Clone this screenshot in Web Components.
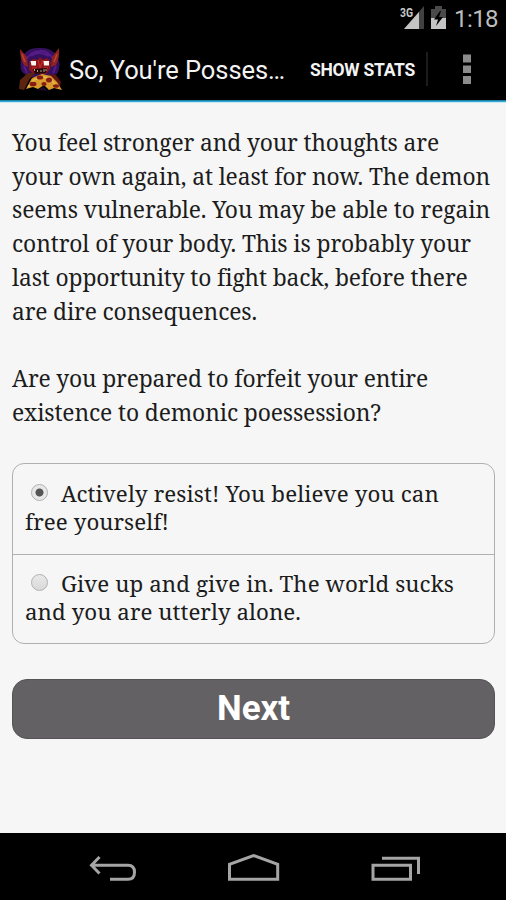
<!DOCTYPE html>
<html lang="en">
<head>
<meta charset="utf-8">
<title>So, You're Possessed!</title>
<style>
  body { margin: 0; }
</style>
</head>
<body>
<game-screen></game-screen>

<template id="game-screen">
  <style>
    :host {
      display: flex;
      flex-direction: column;
      width: 506px;
      height: 900px;
      overflow: hidden;
      background: #f6f6f6;
      color: #1c1c1c;
      font-family: "Noto Serif", "Droid Serif", "DejaVu Serif Condensed", "DejaVu Serif", serif;
      font-stretch: condensed;
      font-size: 22.800px;
    }
    main { flex: 1; padding: 23px 11px 0 12px; }
    .story { line-height: 33.7px; }
    .question { margin-top: 33.7px; }
    choice-list { margin-top: 34px; }
    next-button { margin-top: 35px; }
  </style>
  <status-bar></status-bar>
  <action-bar>So, You're Posses…</action-bar>
  <main>
    <div class="story">
      <text-line width="427">You feel stronger and your thoughts are</text-line>
      <text-line width="478">your own again, at least for now. The demon</text-line>
      <text-line width="478">seems vulnerable. You may be able to regain</text-line>
      <text-line width="459">control of your body. This is probably your</text-line>
      <text-line width="455">last opportunity to fight back, before there</text-line>
      <text-line width="245">are dire consequences.</text-line>
    </div>
    <div class="story question">
      <text-line width="416">Are you prepared to forfeit your entire</text-line>
      <text-line width="369">existence to demonic poessession?</text-line>
    </div>
    <choice-list>
      <choice-item checked>
        <text-line slot="first" width="378">Actively resist! You believe you can</text-line>
        <text-line width="144">free yourself!</text-line>
      </choice-item>
      <choice-item>
        <text-line slot="first" width="393">Give up and give in. The world sucks</text-line>
        <text-line width="276">and you are utterly alone.</text-line>
      </choice-item>
    </choice-list>
    <next-button>Next</next-button>
  </main>
  <nav-bar></nav-bar>
</template>

<template id="status-bar">
  <style>
    :host {
      display: flex;
      justify-content: flex-end;
      align-items: center;
      height: 37px;
      padding-right: 8px;
      background: #000;
      color: #bdbdbd;
      font: 24px Roboto, sans-serif;
    }
    svg { margin-right: 7px; }
    text { font: bold 12px Roboto, sans-serif; fill: #c8c8c8; }
  </style>
  <svg width="48" height="37" viewBox="399 0 48 37">
    <path d="M424 6V29H404Z" fill="#414141"/>
    <path d="M419 12V29H404Z" fill="#c4c4c4"/>
    <path d="M398 5H414V15L409 19H398Z" fill="#000"/>
    <text x="400" y="17" textLength="13" lengthAdjust="spacingAndGlyphs">3G</text>
    <path d="M431 9H435V6H442V9H446V18H431Z" fill="#4a4a4a"/>
    <path d="M431 18H446V29H431Z" fill="#c4c4c4"/>
    <path d="M440 11L434 19.500H438L436 26L443 17H439L441 11Z" fill="#000"/>
  </svg>
  <text-line width="44">1:18</text-line>
</template>

<template id="action-bar">
  <style>
    :host {
      display: flex;
      align-items: center;
      box-sizing: border-box;
      height: 66px;
      padding: 0 0 3px 18px;
      background: linear-gradient(#000 63px, #1c7ea5 63px, #1c7ea5 64px, #39a9d4 64px, #39a9d4 65px, #c5e8f5 65px);
      color: #f3f3f3;
      font-family: Roboto, sans-serif;
      font-stretch: normal;
    }
    .logo { flex: none; }
    .title { width: 241px; padding: 3px 0 0 6px; font-size: 25.500px; }
    .stats { width: 116px; padding-top: 2px; font-size: 17.500px; font-weight: bold; }
    .more { border-left: 2px solid #1c1c1c; height: 34px; padding-left: 34px; }
  </style>
  <svg class="logo" width="45" height="44" viewBox="18 47 45 44">
    <path d="M21 70Q19 60 24 54Q29 47 40 48Q51 47 57 56Q62 65 57 74L49 77H29L23 73Z" fill="#35105f"/>
    <path d="M25 62Q30 51 40 51M54 60Q48 50 40 51M24 66L27 73M56 66L53 73M31 56Q38 50 49 56" fill="none" stroke="#551b87" stroke-width="2"/>
    <path d="M20 49L27 57L28 67L24 65Q20 59 20 49ZM59 48L52 57L51 67L56 65Q60 57 59 48Z" fill="#8d2320"/>
    <path d="M22 54L25 62M57 54L54 62" stroke="#b84438" stroke-width="1.500"/>
    <path d="M29 62L33 59L38 60L40 57L43 60L47 58L51 62L50 69L46 74H34L29 70Z" fill="#8a151b"/>
    <path d="M38 60L40 68L43 60M32 68H37M43 68H48" fill="none" stroke="#bb2626" stroke-width="1.500"/>
    <path d="M30.500 61H36V65.500H31.500ZM43.500 61H49V65.500H44Z" fill="#fff5ee"/>
    <path d="M33 69L47 68L46 73L35 74Z" fill="#1e0909"/>
    <path d="M34.500 69V71M37.500 70V72M41 70V72M44 69V72M46 69V71" stroke="#b69d8b"/>
    <path d="M19 89L20 80L28 73L35 73L29 80L24 90Z" fill="#5b2410"/>
    <path d="M48 74L56 75L61 82L60 86L54 82Z" fill="#611612"/>
    <path d="M26 89L32 78L42 74L51 76L57 82L62 90L54 88L49 90L44 85L38 89L33 87Z" fill="#d99b2c"/>
    <path d="M28 87L34 80L42 77L49 78L55 84" fill="none" stroke="#e8bc4a" stroke-width="1.500"/>
    <g fill="#851d16">
      <ellipse cx="40" cy="77.500" rx="3.200" ry="2"/>
      <ellipse cx="49" cy="80" rx="3" ry="2.500"/>
      <ellipse cx="33" cy="84" rx="3.500" ry="2.300"/>
      <ellipse cx="44" cy="84" rx="2.600" ry="2"/>
      <ellipse cx="56" cy="86" rx="3" ry="1.800"/>
    </g>
    <path d="M38 90L43 87L48 91Z" fill="#1d0b32"/>
  </svg>
  <div class="title"><text-line width="216"><slot></slot></text-line></div>
  <div class="stats"><text-line width="105">SHOW STATS</text-line></div>
  <svg class="more" width="10" height="34" viewBox="0 0 10 34">
    <path d="M1 2.500H9V10.500H1ZM1 13.500H9V21H1ZM1 24H9V32H1Z" fill="#8c8c8c"/>
  </svg>
</template>

<template id="choice-list">
  <style>
    :host {
      display: block;
      box-sizing: border-box;
      height: 181px;
      border: 1.500px solid #b0b0b0;
      border-radius: 12px;
      font-size: 22.300px;
    }
  </style>
  <slot></slot>
</template>

<template id="choice-item">
  <style>
    :host {
      display: block;
      box-sizing: border-box;
      height: 90px;
      padding: 16px 12px 0;
      line-height: 28px;
    }
    :host(:not(:first-child)) { border-top: 1.500px solid #b0b0b0; padding-top: 15px; }
    .row { display: flex; align-items: center; }
    i {
      box-sizing: border-box;
      width: 17px;
      height: 17px;
      margin: -3px 13px 0 6px;
      border: 1.500px solid #b0b0b0;
      border-radius: 50%;
      background: linear-gradient(#e9e9e9, #d9d9d9);
    }
    :host([checked]) i { background: radial-gradient(circle, #555 0 3.500px, #e8e8e8 4.500px); }
  </style>
  <div class="row"><i></i><slot name="first"></slot></div>
  <slot></slot>
</template>

<template id="next-button">
  <style>
    :host {
      display: flex;
      align-items: center;
      justify-content: center;
      box-sizing: border-box;
      height: 60px;
      padding-bottom: 1px;
      border: 1px solid #555355;
      border-radius: 15px;
      background: #636163;
      color: #fff;
      font: bold 35px Roboto, sans-serif;
    }
  </style>
  <text-line width="73"><slot></slot></text-line>
</template>

<template id="nav-bar">
  <style>
    :host { display: block; height: 67px; background: #000; }
    svg { display: block; }
  </style>
  <svg width="506" height="67" viewBox="0 833 506 67" fill="none" stroke="#a5a5a5" stroke-width="3">
    <path d="M99.500 857L91.500 865.300L99.500 873.500M92 865.300H128Q134.500 865.300 134.500 872.300T128 879.300H110"/>
    <path d="M229.500 879.300V864.300L253.500 855.500L277.700 864.300V879.300Z"/>
    <path d="M373 865.300H410.500V879.300H373ZM382 858.300H418.500V874"/>
  </svg>
</template>

<script>
  // Registers a tag whose shadow root is cloned from the template of the same name
  function define(name) {
    customElements.define(name, class extends HTMLElement {
      constructor() {
        super();
        const template = document.getElementById(name);
        this.attachShadow({ mode: 'open' }).appendChild(template.content.cloneNode(true));
      }
    });
  }

  // One line of text, tracked to fill the given width
  class TextLine extends HTMLElement {
    constructor() {
      super();
      this.attachShadow({ mode: 'open' }).innerHTML = `
        <style>
          :host { display: block; white-space: nowrap; }
          span { display: inline-block; }
        </style>
        <span><slot></slot></span>`;
    }

    fit() {
      const span = this.shadowRoot.querySelector('span');
      const slot = this.shadowRoot.querySelector('slot');
      const text = slot.assignedNodes({ flatten: true }).map(n => n.textContent).join('');
      const rest = this.getAttribute('width') - span.getBoundingClientRect().width;
      span.style.letterSpacing = rest / text.length + 'px';
    }
  }

  customElements.define('text-line', TextLine);
  ['status-bar', 'action-bar', 'choice-item', 'choice-list', 'next-button', 'nav-bar', 'game-screen'].forEach(define);

  function fitAll(root) {
    root.querySelectorAll('*').forEach(el => {
      if (el instanceof TextLine) el.fit();
      else if (el.shadowRoot) fitAll(el.shadowRoot);
    });
  }
  fitAll(document);
</script>
</body>
</html>
